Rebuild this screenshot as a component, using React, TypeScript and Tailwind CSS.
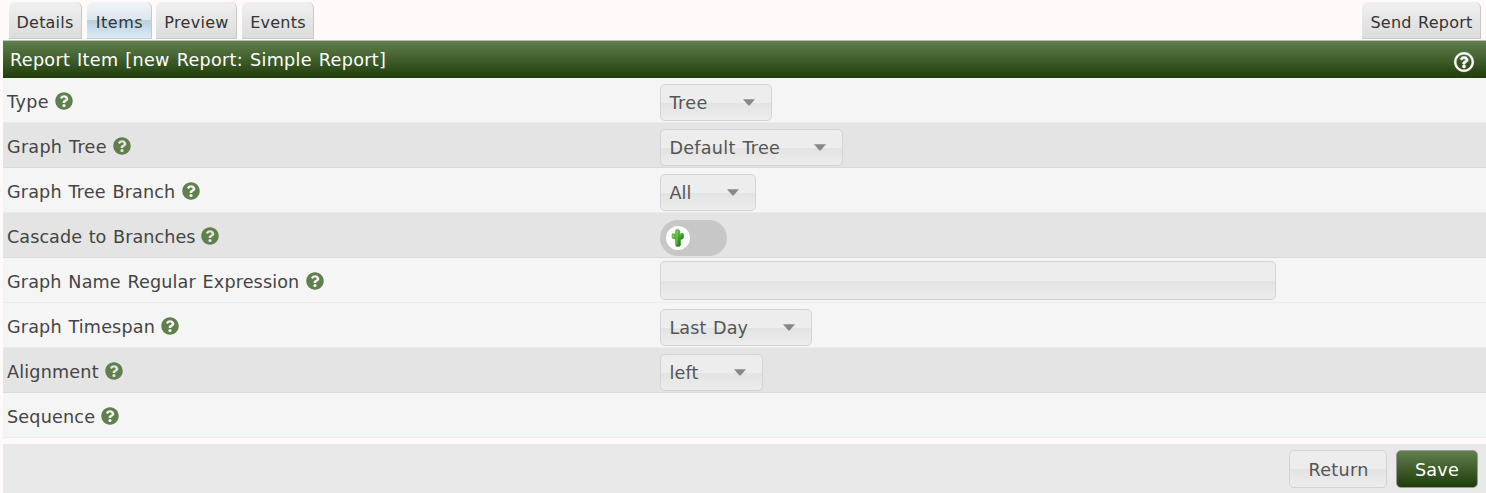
import { FaQuestionCircle, FaRegQuestionCircle } from "react-icons/fa";

const tabs = [
  { label: "Details", cls: "w-[73px] mr-[5px] tracking-[0.2px]" },
  { label: "Items", cls: "w-[65px] mr-1 pl-px tracking-[0.5px]", active: true },
  { label: "Preview", cls: "w-[81px] mr-[5px] pl-px tracking-[0.3px]" },
  { label: "Events", cls: "w-[72px] pl-px tracking-[0.25px]" },
];

type Row = { label: string; track: string; shade?: boolean; select?: string; width?: string; kind?: "toggle" | "input" };

const rows: Row[] = [
  { label: "Type", track: "w-12 tracking-[0.4px]", select: "Tree", width: "w-[112px] tracking-[0.4px]" },
  { label: "Graph Tree", track: "w-[105.5px] tracking-[0.25px] [word-spacing:1px]", select: "Default Tree", width: "w-[183px] tracking-[0.25px] [word-spacing:1px]", shade: true },
  { label: "Graph Tree Branch", track: "w-[174.5px] tracking-[0.15px] [word-spacing:1px]", select: "All", width: "w-[96px]" },
  { label: "Cascade to Branches", track: "w-[194px] tracking-[0.05px] [word-spacing:1px]", kind: "toggle", shade: true },
  { label: "Graph Name Regular Expression", track: "w-[299px] tracking-[0.13px] [word-spacing:1px]", kind: "input" },
  { label: "Graph Timespan", track: "w-[154px] tracking-[0.15px] [word-spacing:1px]", select: "Last Day", width: "w-[152px] tracking-[0.06px] [word-spacing:1px]" },
  { label: "Alignment", track: "w-[97.5px] tracking-[0.18px]", select: "left", width: "w-[103px] tracking-[0.1px]", shade: true },
  { label: "Sequence", track: "w-[94px] tracking-[0.18px]" },
];

const GLASS = "border border-[#d3d3d3] bg-[linear-gradient(to_bottom,#ededed_0%,#ededed_50%,#e3e3e3_51%,#ededed_100%)]";

function Tab({ label, cls, active }: { label: string; cls: string; active?: boolean }) {
  return (
    <button
      className={`flex h-[37px] items-center justify-center rounded-t-[6px] border-r border-b border-[#c8c8c8] pt-[5px] text-[16px] whitespace-nowrap text-[#333] ${cls} ${
        active
          ? "bg-[linear-gradient(to_bottom,#f1f5f8_0%,#dce6ed_50%,#b9cfdc_51%,#dcecf6_100%)]"
          : "bg-[linear-gradient(to_bottom,#f0f0f0,#dcdcdc)]"
      }`}
    >
      {label}
    </button>
  );
}

function Cactus() {
  return (
    <svg width="14" height="20" viewBox="0 0 14 20">
      <defs>
        <linearGradient id="cactus" x1="0" x2="1" y1="0" y2="1">
          <stop offset="0" stopColor="#9bdc62" />
          <stop offset="0.5" stopColor="#43a52b" />
          <stop offset="1" stopColor="#12690f" />
        </linearGradient>
      </defs>
      <path
        d="M4.4 3.2Q4.6 1.4 6.5 1.4T8.8 3.2V8.6H9.3V6.5Q9.5 5.2 11 5.2T12.6 6.5V8.8Q12.6 11.4 9.6 11.5V17.2Q9.3 18.6 7 18.6T4.6 17.2V11H3.5Q1 11 1 8.8V6.9Q1 5.6 2.4 5.6T4 6.9V7.8H4.4Z"
        fill="url(#cactus)"
        stroke="#388e28"
        strokeWidth=".5"
      />
      <path d="M6 3V16.5M2.2 7V9" stroke="#a2df69" strokeWidth=".6" fill="none" />
    </svg>
  );
}

function Control({ row }: { row: Row }) {
  if (row.kind === "toggle")
    return (
      <div className="mt-[7px] flex h-9 w-[67px] items-center rounded-full bg-[#c7c7c7] pl-[6px]">
        <div className="flex size-6 items-center justify-center rounded-full bg-white">
          <Cactus />
        </div>
      </div>
    );
  if (row.kind === "input")
    return <input className={`mt-[3px] h-[39px] w-[616px] rounded-[5px] px-2 text-[18px] outline-none ${GLASS}`} />;
  if (!row.select) return null;
  return (
    <button
      className={`mt-[6px] flex h-[37px] items-center justify-between rounded-[5px] pr-[16px] pl-[8.5px] text-[17.6px] whitespace-nowrap text-[#555] ${GLASS} ${row.width}`}
    >
      <span className="pt-[2px]">{row.select}</span>
      <svg width="12" height="7" viewBox="0 0 12 7">
        <path d="M0 .3H12L6.8 6.2Q6 7 5.2 6.2Z" fill="#888" />
      </svg>
    </button>
  );
}

export default function App() {
  return (
    <div className="h-[493px] w-full overflow-hidden bg-[#fffafa] pl-[3px] font-['DejaVu_Sans',Verdana,sans-serif]">
      <nav className="flex h-10 pt-[2px] pr-[5px] pl-[6px]">
        {tabs.map((t) => (
          <Tab key={t.label} {...t} />
        ))}
        <Tab label="Send Report" cls="ml-auto w-[119px] pl-px tracking-[0.25px] [word-spacing:1px]" />
      </nav>
      <header className="flex h-[38px] items-center justify-between border-t border-[#bcc0b8] bg-[linear-gradient(to_bottom,#5f7f4c,#1f3d0a)] pr-3 pl-[7px] text-[17.6px] text-white">
        <span className="pt-[2px] tracking-[0.31px] [word-spacing:1px]">Report Item [new Report: Simple Report]</span>
        <FaRegQuestionCircle className="mt-[4px] size-5 overflow-visible stroke-white stroke-[14px]" />
      </header>
      {rows.map((row) => (
        <div
          key={row.label}
          className={`flex h-[45px] border-b ${row.shade ? "border-[#dadada] bg-[#e4e4e4]" : "border-[#ebebeb] bg-[#f5f5f5]"}`}
        >
          <div className="flex h-[47px] w-[657px] items-center pl-1 text-[17.6px] text-[#444]">
            <span className={`shrink-0 pt-[2px] whitespace-nowrap ${row.track}`}>{row.label}</span>
            <FaQuestionCircle className="mb-[1px] size-[18px] text-[#5f7f4c]" />
          </div>
          <Control row={row} />
        </div>
      ))}
      <footer className="mt-[6px] flex h-[49px] justify-end bg-[#e9e9e9] pt-[6px] pr-2">
        <button className={`h-[38px] w-[98px] rounded-[5px] pt-[2px] pl-px text-[17.6px] tracking-[0.3px] text-[#555] ${GLASS}`}>Return</button>
        <button className="ml-[9px] h-[38px] w-[82px] rounded-[5px] border border-[#999] bg-[linear-gradient(to_bottom,#5f7f4c,#1f3d0a)] pt-[2px] text-[17.6px] tracking-[0.2px] text-white">
          Save
        </button>
      </footer>
    </div>
  );
}
